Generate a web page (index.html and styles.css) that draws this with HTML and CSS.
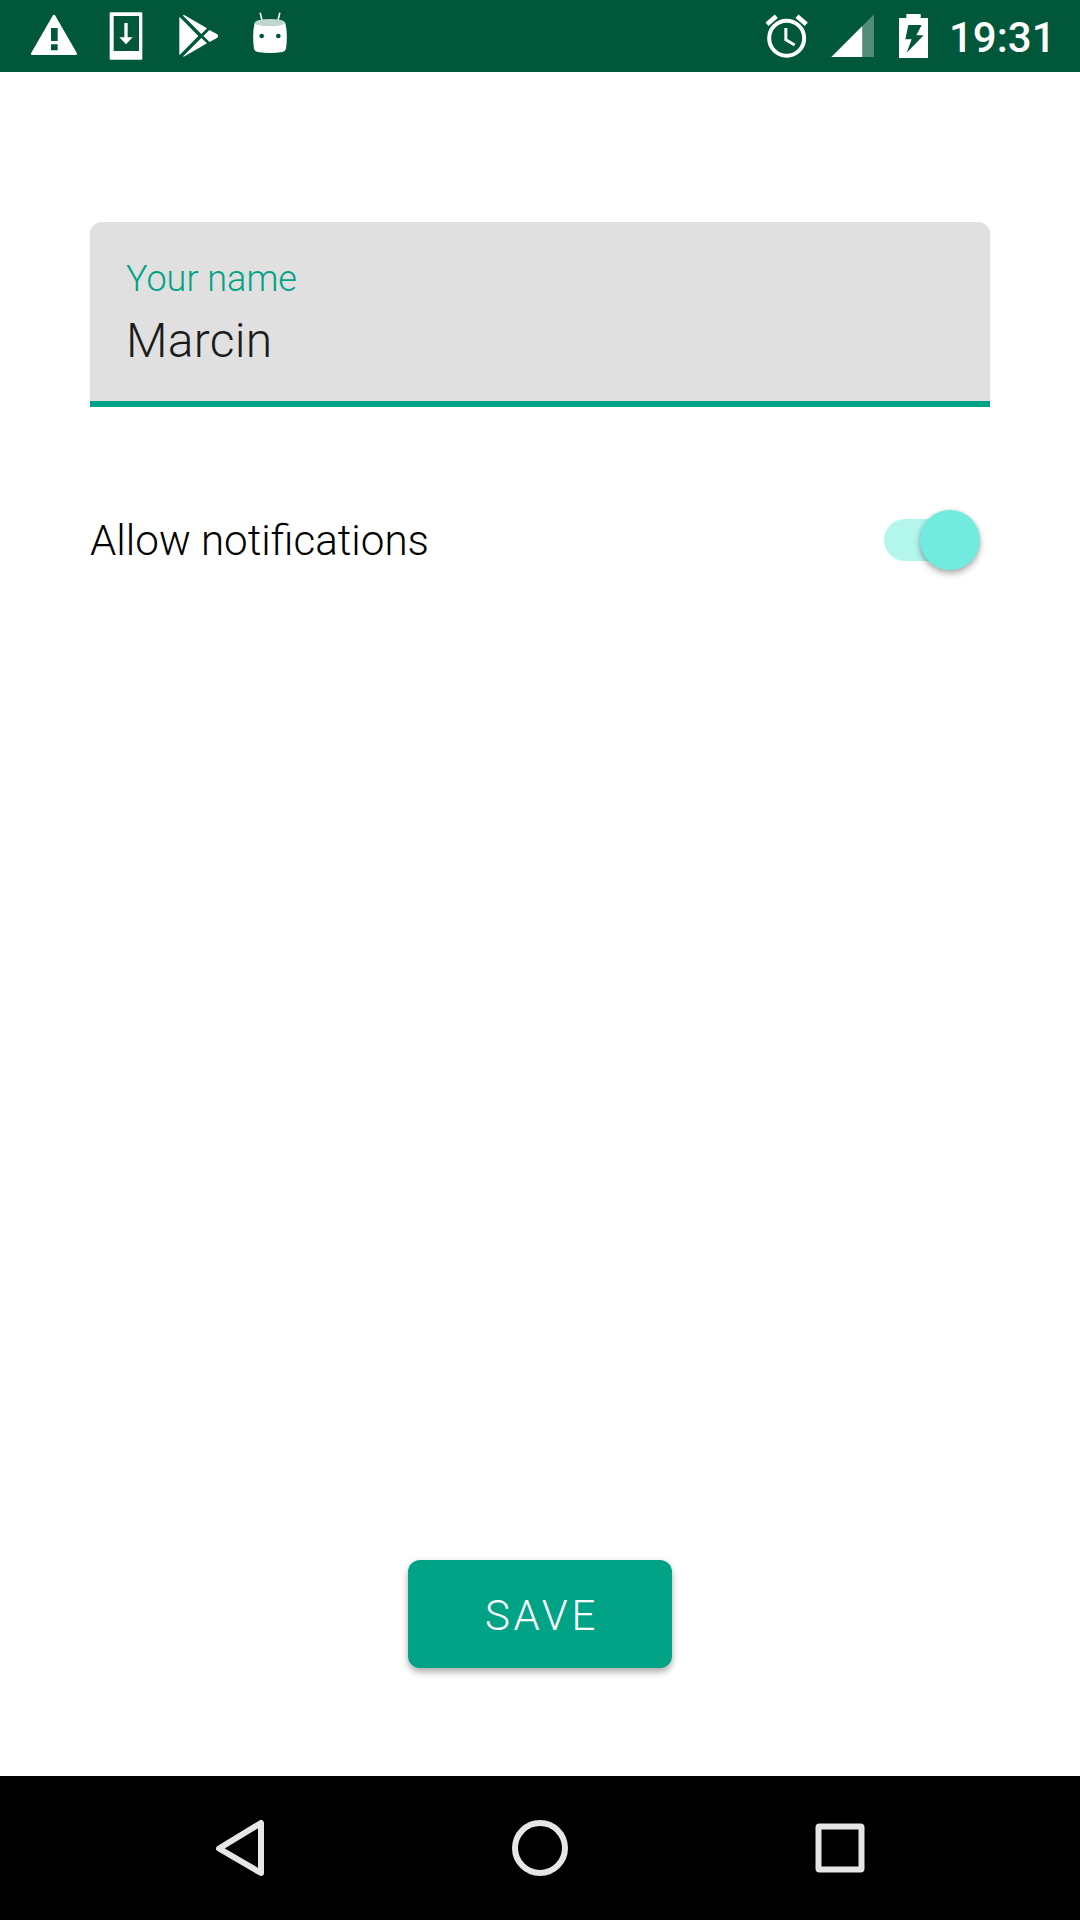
FILE: index.html
```html
<!DOCTYPE html>
<html lang="en">
<head>
<meta charset="utf-8">
<title>Settings</title>
<link rel="stylesheet" href="styles.css">
</head>
<body>
<div class="screen">
  <header class="status-bar">
    <div class="notifications">
      <svg class="notice" viewBox="0 0 216 216">
        <path fill="#fff" fill-rule="evenodd" d="M104 47Q108 42 112 47L176 158Q179 165 172 165H44Q37 165 40 158ZM99 84V123H119V84ZM99 133V151H119V133Z"/>
      </svg>
      <svg class="notice" viewBox="0 0 216 216">
        <path fill="#fff" fill-rule="evenodd" d="M62 37H154Q157 37 157 40V176Q157 179 154 179H62Q59 179 59 176V40Q59 37 62 37ZM71 48V153H147V48Z"/>
        <path fill="#fff" d="M103 69H113V112H128L108 133L88 112H103Z"/>
      </svg>
      <svg class="notice" viewBox="0 0 216 216">
        <path fill="#fff" d="M52 53Q52 50 56 54L109 108L56 162Q52 166 52 163ZM63 47Q63 43 68 46L135 85L118 102ZM118 114L135 130L68 169Q63 172 64 168ZM142 90L166 103Q171 108 166 113L143 126L124 108Z"/>
      </svg>
      <svg class="notice" viewBox="0 0 216 216">
        <path fill="none" stroke="#fff" stroke-width="5" stroke-linecap="round" d="M79 40L85 65M137 40L131 65"/>
        <path fill="#fff" d="M62 68Q108 88 154 68Q162 103 156 146Q154 154 145 156Q108 162 71 156Q62 154 60 146Q54 103 62 68Z"/>
        <ellipse cx="108" cy="68" rx="45" ry="11" fill="#bfd5cd"/>
        <circle cx="83" cy="108" r="7" fill="#00573a"/>
        <circle cx="133" cy="108" r="7" fill="#00573a"/>
      </svg>
    </div>
    <div class="system">
      <svg class="indicator" viewBox="0 0 144 216">
        <circle cx="74" cy="115" r="52.5" fill="none" stroke="#fff" stroke-width="12"/>
        <path fill="none" stroke="#fff" stroke-width="14" d="M15 73L43 49M133 73L105 49"/>
        <path fill="none" stroke="#fff" stroke-width="9" d="M71.500 84V119L98 135"/>
      </svg>
      <svg class="indicator" viewBox="0 0 144 216">
        <path fill="#508c76" d="M138 43V171H103V78Z"/>
        <path fill="#fff" d="M103 78V171H10Z"/>
      </svg>
      <svg class="indicator battery" viewBox="0 0 144 216">
        <path fill="#fff" d="M46 42H89V54H111V174H24V54H46Z"/>
        <path fill="#00573a" d="M52 75H92L76 106H98L47 158L62 118H43Z"/>
      </svg>
      <time class="clock">19:31</time>
    </div>
  </header>

  <main class="form">
    <label class="field">
      <span class="field-label">Your name</span>
      <span class="field-value">Marcin</span>
    </label>
    <div class="setting">
      <span class="setting-label">Allow notifications</span>
      <span class="switch"><span class="thumb"></span></span>
    </div>
    <button class="save" type="button">SAVE</button>
  </main>

  <nav class="nav-bar">
    <svg class="nav-icon" viewBox="0 0 72 72"><path d="M57 11V61L15 36.500Z"/></svg>
    <svg class="nav-icon" viewBox="0 0 72 72"><circle cx="36" cy="36" r="25"/></svg>
    <svg class="nav-icon" viewBox="0 0 72 72"><rect x="14.500" y="14.500" width="43" height="43" rx="1"/></svg>
  </nav>
</div>
</body>
</html>
```
FILE: styles.css
```css
* {
  box-sizing: border-box;
}

body {
  margin: 0;
  background: #fff;
  font-family: Roboto, "Noto Sans", sans-serif;
  font-weight: 300;
}

.screen {
  display: flex;
  flex-direction: column;
  width: 1080px;
  height: 1920px;
}

.status-bar {
  display: flex;
  justify-content: space-between;
  height: 72px;
  padding: 0 27px 0 18px;
  background: #00573a;
}

.notifications,
.system {
  display: flex;
}

.notice {
  width: 72px;
  height: 72px;
}

.indicator {
  width: 48px;
  height: 72px;
  margin-right: 18px;
}

.indicator:nth-child(2) {
  margin-right: 15px;
}

.indicator.battery {
  margin-right: 10px;
}

.clock {
  width: 104px;
  padding-top: 13px;
  color: #fff;
  font-size: 42px;
  font-weight: 500;
  line-height: 50px;
  white-space: nowrap;
}

.form {
  display: flex;
  flex: 1;
  flex-direction: column;
  padding: 150px 90px 108px;
}

.field {
  display: flex;
  flex-direction: column;
  gap: 13px;
  height: 185px;
  padding: 36px 36px 0;
  border-bottom: 6px solid #00a385;
  border-radius: 12px 12px 0 0;
  background: #e0e0e0;
}

.field-label {
  color: #00a385;
  font-size: 36px;
  line-height: 42px;
}

.field-value {
  color: #1c1c1c;
  font-size: 48px;
  line-height: 56px;
  letter-spacing: 0.25px;
}

.setting {
  display: flex;
  align-items: center;
  justify-content: space-between;
  height: 66px;
  margin-top: 100px;
}

.setting-label {
  padding-top: 2px;
  color: #000;
  font-size: 42.15px;
  line-height: 50px;
}

.switch {
  display: flex;
  align-items: center;
  justify-content: flex-end;
  width: 96px;
  height: 42px;
  margin-right: 10px;
  border-radius: 21px;
  background: linear-gradient(to right, #b3f6ec 60px, transparent 60px);
}

.thumb {
  width: 60px;
  height: 60px;
  border-radius: 50%;
  background: #71ebdd;
  box-shadow: 0 4px 6px rgba(0, 0, 0, 0.28), 0 0 4px rgba(0, 0, 0, 0.12);
}

.save {
  align-self: center;
  width: 264px;
  height: 108px;
  margin-top: auto;
  padding: 3px 0 0 4px;
  border: 0;
  border-radius: 12px;
  background: #00a385;
  box-shadow: 0 5px 6px rgba(0, 0, 0, 0.24), 0 1px 6px rgba(0, 0, 0, 0.12);
  color: #fff;
  font: 300 42px/50px Roboto, "Noto Sans", sans-serif;
  letter-spacing: 3.75px;
}

.nav-bar {
  display: flex;
  align-items: center;
  justify-content: center;
  gap: 228px;
  height: 144px;
  background: #000;
}

.nav-icon {
  width: 72px;
  height: 72px;
  fill: none;
  stroke: #e6e6e6;
  stroke-width: 6;
  stroke-linejoin: round;
}
```
